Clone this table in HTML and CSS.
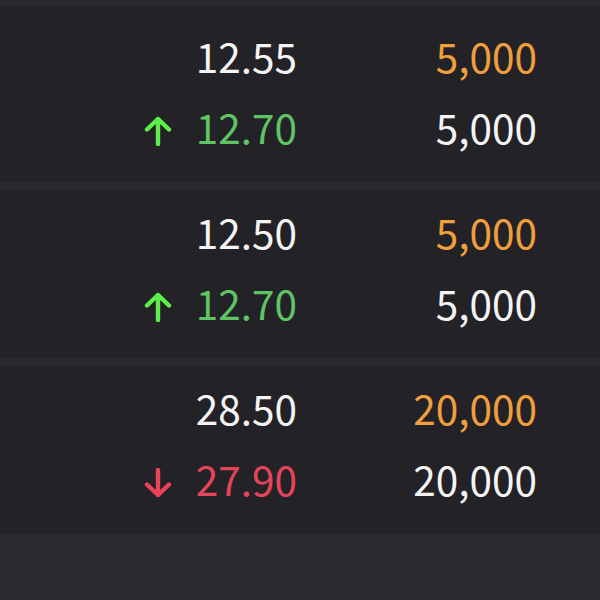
FILE: index.html
```html
<!DOCTYPE html>
<html>
<head>
<meta charset="utf-8">
<link rel="stylesheet" href="styles.css">
</head>
<body>
<div class="list">
  <div class="card">
    <div class="row">
      <div class="price white">12.55</div>
      <div class="qty orange">5,000</div>
    </div>
    <div class="row">
      <div class="price green"><svg class="arrow" viewBox="0 0 28 30"><path d="M14 28V3M3 13.5L14 3L25 13.5" fill="none" stroke="#5df04c" stroke-width="4.4" stroke-linecap="round" stroke-linejoin="round"/></svg>12.70</div>
      <div class="qty white">5,000</div>
    </div>
  </div>
  <div class="card">
    <div class="row">
      <div class="price white">12.50</div>
      <div class="qty orange">5,000</div>
    </div>
    <div class="row">
      <div class="price green"><svg class="arrow" viewBox="0 0 28 30"><path d="M14 28V3M3 13.5L14 3L25 13.5" fill="none" stroke="#5df04c" stroke-width="4.4" stroke-linecap="round" stroke-linejoin="round"/></svg>12.70</div>
      <div class="qty white">5,000</div>
    </div>
  </div>
  <div class="card">
    <div class="row">
      <div class="price white">28.50</div>
      <div class="qty orange">20,000</div>
    </div>
    <div class="row">
      <div class="price red"><svg class="arrow" viewBox="0 0 28 30"><path d="M14 2V27M3 16.5L14 27L25 16.5" fill="none" stroke="#ec4358" stroke-width="4.4" stroke-linecap="round" stroke-linejoin="round"/></svg>27.90</div>
      <div class="qty white">20,000</div>
    </div>
  </div>
</div>
</body>
</html>
```
FILE: styles.css
```css
html, body {
  margin: 0;
  padding: 0;
  background: #2b2930;
  height: 100%;
}
body {
  font-family: "Noto Sans CJK SC", "Noto Sans", sans-serif;
}
.list {
  display: flex;
  flex-direction: column;
  gap: 8px;
  padding-top: 7px;
}
.card {
  background: #232226;
  height: 168px;
  box-sizing: border-box;
  padding-top: 7px;
}
.card:first-child {
  height: 175px;
  padding-top: 14px;
}
.row {
  display: grid;
  grid-template-columns: 1fr 240px;
  height: 71px;
  align-items: center;
  padding-right: 63px;
  font-size: 40.5px;
  line-height: 1;
}
.price, .qty {
  display: flex;
  justify-content: flex-end;
  align-items: center;
}
.arrow {
  width: 28px;
  height: 30px;
  margin-right: 24px;
  position: relative;
  top: 3px;
}
.white { color: #f4f4f4; }
.orange { color: #ef9f3e; }
.green { color: #5fc463; }
.red { color: #e5455b; }
```
